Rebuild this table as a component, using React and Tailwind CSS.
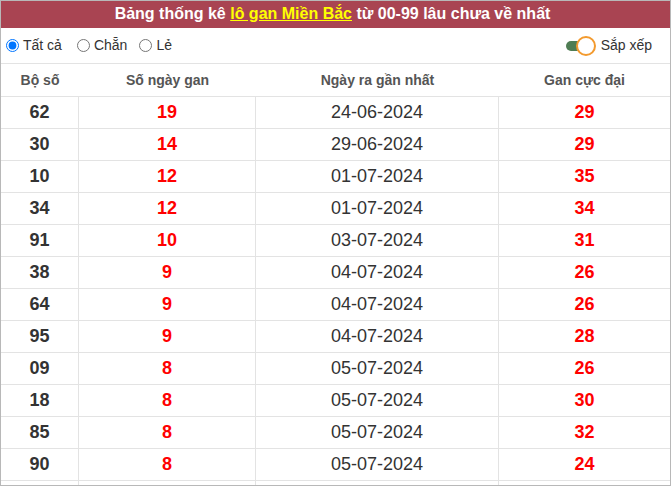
import React from "react";

const rows = [
  ["62", "19", "24-06-2024", "29"],
  ["30", "14", "29-06-2024", "29"],
  ["10", "12", "01-07-2024", "35"],
  ["34", "12", "01-07-2024", "34"],
  ["91", "10", "03-07-2024", "31"],
  ["38", "9", "04-07-2024", "26"],
  ["64", "9", "04-07-2024", "26"],
  ["95", "9", "04-07-2024", "28"],
  ["09", "8", "05-07-2024", "26"],
  ["18", "8", "05-07-2024", "30"],
  ["85", "8", "05-07-2024", "32"],
  ["90", "8", "05-07-2024", "24"],
  ["", "", "", ""],
];

export default function App() {
  return (
    <div className="w-[671px] h-[486px] overflow-hidden bg-white border border-[#b8b8b8] font-['Liberation_Sans',Arial,sans-serif] text-[#333]">
      <div className="h-[27px] bg-[#a94452] text-white font-bold text-[16px] leading-[25px] text-center pr-[6px]">
        Bảng thống kê <span className="text-[#ffff00] underline">lô gan Miền Bắc</span> từ 00-99 lâu chưa về nhất
      </div>
      <div className="h-[36px] flex items-center justify-between border-b border-[#e3e3e3] pr-[18px]">
        <div className="flex items-center text-[14px] text-[#333]">
          <label className="flex items-center">
            <input type="radio" name="f" defaultChecked className="w-[13px] h-[13px] ml-[5px] mr-[4px]" />
            Tất cả
          </label>
          <label className="flex items-center ml-[15px]">
            <input type="radio" name="f" className="w-[13px] h-[13px] mr-[4px]" />
            Chẵn
          </label>
          <label className="flex items-center ml-[12px]">
            <input type="radio" name="f" className="w-[13px] h-[13px] mr-[4px]" />
            Lẻ
          </label>
        </div>
        <div className="flex items-center text-[14px]">
          <div className="relative w-[31px] h-[20px] mr-[4px]">
            <div className="absolute left-0 top-[5px] w-[20px] h-[10px] rounded-full bg-[#4f7d54]" />
            <div className="absolute left-[10px] top-0 w-[20px] h-[20px] rounded-full bg-white border-[2px] border-[#f39a2e]" />
          </div>
          Sắp xếp
        </div>
      </div>
      <div className="grid grid-cols-[78px_177px_243px_1fr] h-[33px] items-center border-b border-[#e3e3e3] text-[14px] font-bold text-[#555] text-center">
        <div>Bộ số</div>
        <div>Số ngày gan</div>
        <div>Ngày ra gần nhất</div>
        <div>Gan cực đại</div>
      </div>
      {rows.map((r, i) => (
        <div
          key={i}
          className="grid grid-cols-[78px_177px_243px_1fr] h-[32px] border-b border-[#e3e3e3] text-[18px] text-center"
        >
          <div className="flex items-center justify-center border-r border-[#e3e3e3] font-bold text-[#333]">{r[0]}</div>
          <div className="flex items-center justify-center border-r border-[#e3e3e3] font-bold text-[#ff0000]">{r[1]}</div>
          <div className="flex items-center justify-center border-r border-[#e3e3e3] text-[#333]">{r[2]}</div>
          <div className="flex items-center justify-center font-bold text-[#ff0000]">{r[3]}</div>
        </div>
      ))}
    </div>
  );
}
